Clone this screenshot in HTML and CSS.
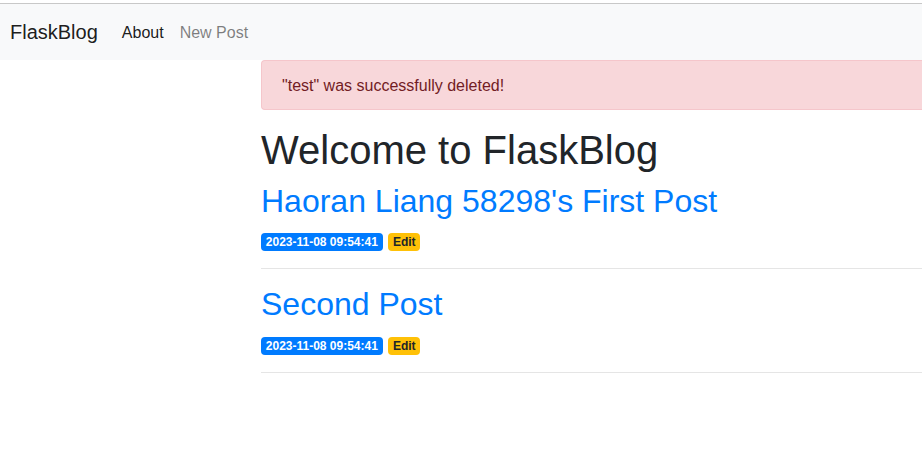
FILE: index.html
```html
<!DOCTYPE html>
<html lang="en">
<head>
<meta charset="utf-8">
<title>FlaskBlog</title>
<link rel="stylesheet" href="styles.css">
</head>
<body>
<div class="topline"></div>
<nav class="navbar">
  <a class="brand" href="#">FlaskBlog</a>
  <ul class="nav">
    <li><a class="nav-link active" href="#">About</a></li>
    <li><a class="nav-link" href="#">New Post</a></li>
  </ul>
</nav>
<main class="content">
  <div class="alert">"test" was successfully deleted!</div>
  <h1 class="title">Welcome to FlaskBlog</h1>
  <article class="post">
    <a class="post-link" href="#"><h2 class="post-title">Haoran Liang 58298's First Post</h2></a>
    <div class="meta"><span class="badge badge-primary">2023-11-08 09:54:41</span> <a class="badge badge-warning" href="#">Edit</a></div>
    <hr class="sep">
  </article>
  <article class="post">
    <a class="post-link" href="#"><h2 class="post-title">Second Post</h2></a>
    <div class="meta"><span class="badge badge-primary">2023-11-08 09:54:41</span> <a class="badge badge-warning" href="#">Edit</a></div>
    <hr class="sep">
  </article>
</main>
</body>
</html>
```
FILE: styles.css
```css
html, body {
  margin: 0;
  padding: 0;
  overflow: hidden;
  background: #fff;
}
body {
  font-family: "Liberation Sans", Arial, sans-serif;
  font-size: 16px;
  line-height: 1.5;
  color: #212529;
  width: 922px;
}
.topline {
  height: 3px;
  background: #fff;
  border-bottom: 1px solid #c8c8c8;
}
.navbar {
  display: flex;
  align-items: center;
  height: 56px;
  box-sizing: border-box;
  padding: 8px 10px;
  background: #f8f9fa;
}
.brand {
  font-size: 20px;
  line-height: 30px;
  padding: 5px 0;
  margin-right: 16px;
  color: rgba(0,0,0,.9);
  text-decoration: none;
}
.nav {
  display: flex;
  list-style: none;
  margin: 0;
  padding: 0;
}
.nav-link {
  display: block;
  padding: 9px 8px 7px;
  color: rgba(0,0,0,.5);
  text-decoration: none;
}
.nav-link.active {
  color: rgba(0,0,0,.9);
}
.content {
  margin-left: 261px;
  width: 661px;
}
.alert {
  padding: 13px 20px 11px;
  margin-bottom: 16px;
  margin-right: -20px;
  border: 1px solid #f5c6cb;
  border-right: 0;
  border-radius: 4px 0 0 4px;
  background: #f8d7da;
  color: #721c24;
}
.title {
  font-size: 40px;
  font-weight: 500;
  line-height: 1.2;
  margin: 0 0 8px;
}
.post-link {
  color: #007bff;
  text-decoration: none;
}
.post-title {
  font-size: 32px;
  font-weight: 500;
  line-height: 1.2;
  margin: 0 0 8px;
  white-space: nowrap;
}
.meta {
  line-height: 24px;
  padding-top: 1px;
  margin-bottom: -1px;
}
.badge {
  display: inline-block;
  padding: 3px 4.8px;
  font-size: 12px;
  font-weight: 700;
  line-height: 1;
  border-radius: 4px;
  text-decoration: none;
  vertical-align: baseline;
}
.badge-primary {
  background: #007bff;
  color: #fff;
}
.badge-warning {
  margin-left: 1px;
  background: #ffc107;
  color: #212529;
}
.sep {
  margin: 16px 0;
  border: 0;
  border-top: 1px solid rgba(0,0,0,.1);
}
```
